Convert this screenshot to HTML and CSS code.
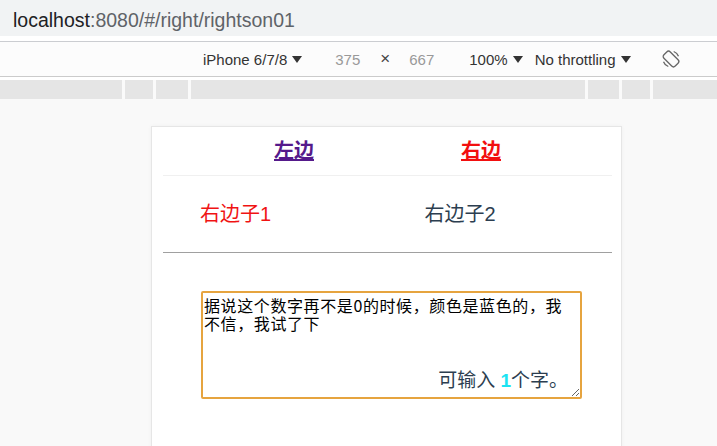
FILE: index.html
```html
<!DOCTYPE html>
<html lang="zh-CN">
<head>
  <meta charset="UTF-8">
  <title>rightson01</title>
  <link rel="stylesheet" href="styles.css">
</head>
<body>
  <div class="addr"><span class="host">localhost</span>:8080/#/right/rightson01</div>
  <div class="devbar">
    <span class="item">iPhone 6/7/8<i class="caret"></i></span>
    <span class="item dim gap-a">375</span>
    <span class="item times">&times;</span>
    <span class="item dim times-r">667</span>
    <span class="item gap-b">100%<i class="caret"></i></span>
    <span class="item gap-c">No throttling<i class="caret"></i></span>
    <svg class="rotate" width="20" height="20" viewBox="0 0 20 20">
      <path d="M12.7 2.5A8 8 0 0 1 17.5 7.3M7.3 17.5A8 8 0 0 1 2.5 12.7" fill="none" stroke="#666" stroke-width="1.3"/>
      <rect x="5.5" y="2" width="9" height="16" rx="2.5" transform="rotate(-45 10 10)" fill="none" stroke="#666" stroke-width="1.3"/>
    </svg>
  </div>
  <div class="ruler">
    <span class="seg s1"></span>
    <span class="seg s2"></span>
    <span class="seg s3"></span>
    <span class="seg s4"></span>
    <span class="seg s5"></span>
    <span class="seg s6"></span>
    <span class="seg s7"></span>
  </div>
  <div class="page">
    <div class="card">
      <div class="nav">
        <a href="#/left" class="visited">左边</a>
        <a href="#/right" class="active">右边</a>
      </div>
      <div class="sub">
        <div class="subitem on">右边子1</div>
        <div class="subitem">右边子2</div>
      </div>
      <div class="box">
        <textarea class="input">据说这个数字再不是0的时候，颜色是蓝色的，我
不信，我试了下</textarea>
        <div class="count">可输入 <b>1</b>个字。</div>
      </div>
    </div>
  </div>
</body>
</html>
```

FILE: styles.css
```css
html,body{margin:0; height:446px; overflow:hidden;}
body{font-family:"Liberation Sans", "Noto Sans CJK SC", sans-serif; background:#fff;}

.addr{height:31px; padding:5px 0 0 13px; line-height:31px; background:#f1f3f4; color:#5f6368; font-size:19.5px; margin-bottom:5px;}
.addr .host{color:#202124;}

.devbar{height:34px; display:flex; align-items:center; padding-left:203px; border-top:1px solid #cbcdd1; border-bottom:1px solid #cbcbcb; background:#fcfcfc; font-size:15px; color:#333;}
.devbar .item{display:flex; align-items:center; white-space:nowrap;}
.devbar .dim{color:#999;}
.caret{display:inline-block; width:0; height:0; margin-left:5px; border-left:5px solid transparent; border-right:5px solid transparent; border-top:7px solid #333;}
.gap-a{margin-left:33px;}
.times{margin-left:20px; font-size:17px; color:#444;}
.times-r{margin-left:19px;}
.gap-b{margin-left:35px;}
.gap-c{margin-left:12px;}
.rotate{margin-left:30px;}

.ruler{display:flex; gap:3px; margin-top:3px; height:19px; background:#fafafa;}
.seg{background:#e5e5e5;}
.s1{width:122px;} .s2{width:28px;} .s3{width:32px;} .s4{width:394px;} .s5{width:31px;} .s6{width:28px;} .s7{flex:1;}

.page{height:347px; padding-top:27px; box-sizing:border-box; background:#f9f9f9;}
.card{width:449px; height:400px; margin-left:151px; padding:0 9px 0 11px; background:#fff; border:1px solid #e6e6e6; box-shadow:0 0 4px rgba(0,0,0,.04);}

.nav{height:48px; display:flex; justify-content:center; gap:147px; line-height:48px; border-bottom:1px solid #f0f0f0; font-size:20px; font-weight:bold;}
.nav a{color:#551a8b;}
.nav a.active{color:#f20f0f;}

.sub{display:flex; height:76px; line-height:76px; border-bottom:1px solid #a0a0a0; font-size:20px; color:#2c3e50;}
.subitem{width:50%; padding-left:37px;}
.subitem.on{color:#f01313;}

.box{position:relative; width:381px; height:108px; margin:38px 0 0 38px;}
.input{display:block; width:100%; height:108px; box-sizing:border-box; margin:0; padding:3px 1px; border:2px solid #e6a43f; border-radius:2px; outline:none; font-family:"Noto Sans CJK SC", sans-serif; font-size:16px; line-height:18px; letter-spacing:0.6px; color:#000;}
.count{position:absolute; right:14px; bottom:8px; line-height:21px; font-size:19px; color:#2c3e50;}
.count b{color:#1be3f2;}
```
